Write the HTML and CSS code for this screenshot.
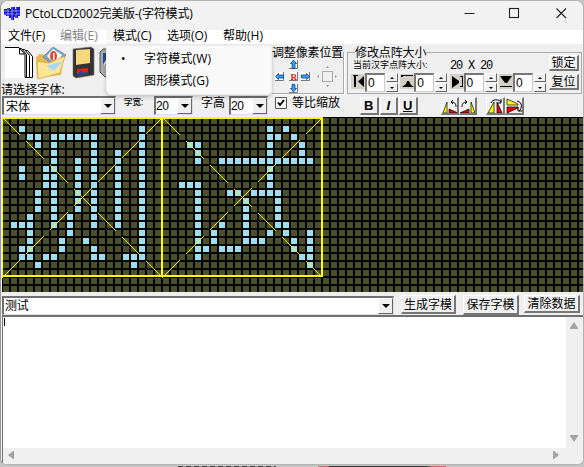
FILE: index.html
```html
<!DOCTYPE html>
<html lang="zh-CN">
<head>
<meta charset="utf-8">
<title>PCtoLCD2002</title>
<link rel="stylesheet" href="styles.css">
</head>
<body>
<main class="window">
  <header class="titlebar">
    <svg class="logo" width="17" height="14" viewBox="0 0 17 14"><path fill="#1212dc" d="M0 3h3V2h3v2h1V1h4v2h1V1h4v9h-2v2h-3v-1h-1v3H7v-2H5v-2H2V9H0z"/><path stroke="#f2f2f2" stroke-width=".5" d="M0 5h17M0 8h17M4 1v12M8 1v13M12 1v13"/><path fill="#202060" d="M5 3h2v2H5zM10 6h2v2h-2z"/></svg>
    <h1>PCtoLCD2002完美版-(字符模式)</h1>
    <svg class="controls" width="104" height="12" viewBox="0 0 104 12" fill="none" stroke="#222" stroke-width="1.1"><path d="M.5 6.500h10M92.500 1.500l9.500 9.500M102 1.500l-9.500 9.500"/><rect x="45.500" y="1.500" width="9" height="9"/></svg>
  </header>
  <nav class="menubar">
    <span>文件(F)</span><span class="off">编辑(E)</span><span class="open">模式(C)</span><span>选项(O)</span><span>帮助(H)</span>
    <div class="dropdown">
      <div><i>•</i>字符模式(W)</div>
      <div><i></i>图形模式(G)</div>
    </div>
  </nav>
  <section class="tools">
    <div class="files">
      <svg width="110" height="34" viewBox="0 0 110 34">
        <g fill="#fff" stroke="#000"><path d="M12.500 4.500h11l5 6v21h-18z"/><path d="M9.500 3.500h11l5 6v22h-17z"/><path d="M6.500 2.500h11l5 6v23h-17z"/><path stroke="none" d="M1 2h14l6 7v23H1z"/><path fill="none" d="M1 1.500h14l6 7v23M15.500 2v6h5"/></g>
        <path fill="#e8b84c" d="M32 12l3-4 9 1 3 3 13-1-3 18-24 3z"/><path fill="#7da5c4" stroke="#55738a" stroke-width=".6" d="M39 11L49 1l13 8-9 13z"/><path fill="#fff" d="M43 10l6-7 9 6-7 9z"/><ellipse cx="49.500" cy="10" rx="3.500" ry="5" fill="#e3492f"/><path fill="#fff" d="M49 7h1.500v7H49z"/>
        <path fill="#ffe596" stroke="#cda13a" stroke-width=".7" d="M33 15l12 2 16-7-5 17-22 6z"/><path fill="#a9d8ff" d="M42 20l17-5-9 10z"/>
        <path fill="#333" stroke="#777" stroke-width=".6" d="M69 3l18-2 3 2v26l-18 3-3-2z"/><path fill="#f6d77b" d="M72 4l14-1v14l-14 2z"/><path fill="#e12312" d="M73 23l11-1v6l-11 2z"/><path fill="#1447a4" d="M73 28l5-4v3l6-1v2l-11 2z"/>
        <path fill="#a9a9a9" stroke="#555" d="M96 6l3-3h11v28h-9l-5-5z"/><path fill="#26479b" d="M99 7h9v12h-9z"/><path stroke="#ddd" stroke-width="2" d="M100 19l5-8"/>
      </svg>
      <label>请选择字体:</label>
    </div>
    <fieldset class="move">
      <legend>调整像素位置</legend>
      <svg width="64" height="34" viewBox="0 0 64 34">
        <g fill="#fff"><path d="M15 1h9v9h-9zM1 13h9v9H1zM15 13h9v9h-9zM27 13h9v9h-9zM15 25h9v9h-9z"/></g>
        <path fill="none" stroke="#777" d="M23.500 1v8.500H15M9.500 13v8.500H1M23.500 13v8.500H15M35.500 13v8.500H27M23.500 25v8.500H15"/>
        <g fill="#37a0f4" stroke="#0b408b" stroke-width=".8"><path d="M19.500 1l3 3.500h-1.500v5h-3v-5h-1.500z"/><path d="M1.500 17.500l3-3v1.500h5v3h-5v1.500z"/><path d="M35.500 17.500l-3-3v1.500h-5v3h5v1.500z"/><path d="M19.500 33l3-3.500h-1.500v-4h-3v4h-1.500z"/></g>
        <text x="16.500" y="21" class="reset">R</text>
        <rect x="48.500" y="12.500" width="10" height="10" fill="none" stroke="#aaa"/><path fill="#999" d="M52 9l1.500-2L55 9zM52 26l1.500 2 1.500-2zM45 16l-2 1.500 2 1.500zM61 16l2 1.500-2 1.500z"/>
      </svg>
    </fieldset>
    <fieldset class="size">
      <legend>修改点阵大小</legend>
      <div class="current"><small>当前汉字点阵大小:</small><b>20 X 20</b></div>
      <div class="spinners">
        <div class="spin"><svg width="14" height="15"><path d="M2 1h5v1H5v11H3V2H2zM13 2v11L7 7.500z"/></svg><output>0</output><span><i></i><i></i></span></div>
        <div class="spin"><svg width="14" height="15"><path d="M1 1h12v1H3v1H1zM2 13h12l-3-2-2-4H7l-1 3z"/></svg><output>0</output><span><i></i><i></i></span></div>
        <div class="spin"><svg width="14" height="15"><path d="M2 2l7 5v2l-7 5zM10 2h3v11h-3v-1h2V3h-2z"/></svg><output>0</output><span><i></i><i></i></span></div>
        <div class="spin"><svg width="14" height="15"><path d="M1 2h12L8 9H6zM1 12h12v1H1z"/></svg><output>0</output><span><i></i><i></i></span></div>
      </div>
      <div class="locks"><button>锁定</button><button>复位</button></div>
    </fieldset>
  </section>
  <section class="format">
    <div class="combo font">宋体<i></i></div>
    <small class="w">字宽:</small>
    <div class="combo num">20<i></i></div>
    <span class="h">字高</span>
    <div class="combo num">20<i></i></div>
    <label class="check"><svg width="12" height="12"><path fill="#fff" stroke="#555" d="M.500.500h11v11H.500z"/><path fill="none" stroke="#000" stroke-width="2" d="M3 5.500l2 2.500 4-5"/></svg>等比缩放</label>
    <div class="styles"><button><b>B</b></button><button><b><em>I</em></b></button><button><b><u>U</u></b></button></div>
    <div class="turn">
      <button><svg width="16" height="16"><path fill="#ff0" stroke="#000" stroke-width=".7" d="M1 15L5 4v11z"/><path fill="#e00" stroke="#000" stroke-width=".7" d="M7 15v-4l9 4z"/><path fill="none" stroke="#000" d="M14 9c0-4-2-5-5-5M11 2L9 4l2 2"/></svg></button>
      <button><svg width="16" height="16"><path fill="#ff0" stroke="#000" stroke-width=".7" d="M11 15V4l4 11z"/><path fill="#e00" stroke="#000" stroke-width=".7" d="M0 15l9-4v4z"/><path fill="none" stroke="#000" d="M2 9c0-4 2-5 5-5M5 2l2 2-2 2"/></svg></button>
    </div>
    <div class="turn flip">
      <button><svg width="17" height="16"><path fill="#ff0" stroke="#000" stroke-width=".7" d="M1 15L7 4v11z"/><path fill="#e00" stroke="#000" stroke-width=".7" d="M10 4l5 11h-5z"/><path fill="none" stroke="#000" d="M4 5c1-4 8-4 10-1M14 1v4h-4"/></svg></button>
      <button><svg width="17" height="16"><path fill="#ff0" stroke="#000" stroke-width=".7" d="M1 1l11 5v1H1z"/><path fill="#e00" stroke="#000" stroke-width=".7" d="M1 15l11-5V9H1z"/><path fill="none" stroke="#000" d="M11 3c6 1 5 8 2 10M12 9v4h4"/></svg></button>
    </div>
  </section>
  <svg class="matrix" id="matrix" width="581" height="175" viewBox="2 117 581 175" shape-rendering="crispEdges">
    <defs><pattern id="cell" x="3" y="118" width="8" height="8" patternUnits="userSpaceOnUse"><rect width="8" height="8" fill="#000"/><rect width="6" height="6" fill="#4a5029"/></pattern></defs>
    <rect x="2" y="117" width="581" height="175" fill="#000"/>
    <rect x="3" y="118" width="580" height="174" fill="url(#cell)"/>
    <path id="dots" fill="#9ce0f0"/>
    <path id="diagonals" fill="#ff0"/>
    <path fill="#ff0" d="M2 117h321v2H2zM2 275h321v2H2zM2 117h1v160H2zM161 117h2v160h-2zM321 117h2v160h-2z"/>
  </svg>
  <section class="entry">
    <div class="combo text">测试<i></i></div>
    <button class="make">生成字模</button><button class="save">保存字模</button><button class="clear">清除数据</button>
  </section>
  <section class="result">
    <div class="paper"><span class="caret"></span></div>
    <svg class="vbar" width="17" height="132"><path fill="#a3a3a3" d="M4 11l4-6 4 6v1H4zM4 118h8v1l-4 6-4-6z"/></svg>
    <svg class="hbar" width="580" height="16"><path fill="#a3a3a3" d="M11 3v8h-1l-5-4 5-4zM550 3v8h1l5-4-5-4z"/></svg>
  </section>
</main>
<footer class="behind"><i class="one"></i><i class="two"></i></footer>
<script src="matrix.js"></script>
</body>
</html>
```
FILE: styles.css
```css
* { box-sizing: border-box; }
body {
  margin: 0; width: 584px; height: 467px; overflow: hidden;
  background: #c4c4c4; color: #000;
  font: 12px/14px "Open Sans", "Noto Sans CJK SC", sans-serif;
}
.window {
  width: 584px; height: 465px; display: flex; flex-direction: column;
  border: 1px solid #b3b3b3; border-left-color: #999; border-radius: 8px 8px 6px 6px;
  background: #efefef; overflow: hidden;
}
.titlebar { height: 29px; flex: none; display: flex; align-items: flex-start; background: #f2f2f2; padding: 4px 15px 0 3px; }
.logo { margin-top: 1px; }
h1 { margin: 1px 0 0 4px; font-size: 12px; line-height: 15px; font-weight: 400; letter-spacing: -.17px; white-space: nowrap; }
.controls { margin: 2px 0 0 auto; }
.menubar { position: relative; z-index: 2; height: 14px; flex: none; display: flex; background: #fff; }
.menubar > span { width: 54px; padding-left: 7px; line-height: 12px; white-space: nowrap; }
.menubar > span:first-child { width: 52px; }
.menubar > .off { width: 53px; color: #858585; }
.menubar > .open { background: #f7f7f7; }
.menubar > span:nth-child(4) { width: 56px; }
.dropdown {
  position: absolute; left: 105px; top: 15px; width: 166px; height: 50px; padding-top: 3px;
  background: #f9f9f9; border: 1px solid #eee; border-radius: 0 0 5px 5px; box-shadow: 0 2px 4px #0003;
}
.dropdown div { height: 22px; line-height: 20px; display: flex; letter-spacing: .15px; }
.dropdown i { width: 37px; padding-left: 14px; font-style: normal; }
.tools { height: 51px; flex: none; display: flex; }
.files { width: 271px; padding: 2px 0 0 3px; }
.files svg { display: block; }
.files label { display: block; margin: 2px 0 0 -3px; line-height: 15px; letter-spacing: .1px; }
fieldset { display: block; margin: 1px 0 0; padding: 0; border: 1px solid #aaa; height: 49px; min-width: 0; position: relative; }
legend { padding: 0; line-height: 15px; white-space: nowrap; height: 15px; }
.move { width: 72px; border-left: 0; box-shadow: 1px 1px #fff; }
.move svg { display: block; margin: -1px 0 0 2px; }
.move legend { letter-spacing: -.15px; }
.reset { font: bold 9px "Liberation Serif", serif; fill: #e01010; }
.size { width: 235px; margin-left: 3px; }
.size legend { margin-left: 7px; letter-spacing: -.1px; }
.current { display: flex; height: 13px; padding-left: 5px; align-items: center; margin-top: -2px; }
.current small { width: 97px; font-size: 9px; line-height: 12px; white-space: nowrap; }
.current b { font: 12px/12px "Liberation Mono", monospace; letter-spacing: -1.2px; padding-top: 2px; }
.spinners { display: flex; padding-left: 3px; margin-top: 2px; }
.spin { display: flex; width: 49.3px; height: 20px; }
.spin > svg { flex: none; background: #d4d0c8; margin-top: 1px; }
.spin output { width: 20px; height: 19px; padding: 2px 0 0 1px; background: #fff; border: 1px solid #ccc; border-top: 2px solid #777; border-left: 2px solid #777; font: 12px/12px "Liberation Sans", sans-serif; }
.spin span { width: 13px; }
.spin i { display: flex; height: 9px; margin: 0 0 1px 1px; background: #f0f0f0; border: 1px solid #fff; border-right-color: #666; border-bottom-color: #666; align-items: center; justify-content: center; }
.spin i::after, .combo i::after { content: ""; border: 2px solid transparent; border-top: 0; border-bottom: 2px solid #000; }
.spin i + i::after { transform: rotate(180deg); }
.locks { position: absolute; right: 2px; top: -5px; display: grid; gap: 3px; }
button { padding: 0; margin: 0; background: #f0f0f0; border: 1px solid #fff; border-right: 2px solid #777; border-bottom: 2px solid #777; color: #000; font: 12px/13px "Open Sans", "Noto Sans CJK SC", sans-serif; white-space: nowrap; }
.locks button { width: 30px; height: 16px; line-height: 12px; }
.format { height: 22px; flex: none; display: flex; align-items: flex-start; padding: 1px 0 0 1px; }
.combo { display: flex; justify-content: space-between; background: #fff; border: 1px solid #ddd; border-top: 2px solid #707070; border-left: 2px solid #707070; padding-left: 2px; line-height: 17px; height: 19px; }
.combo i { flex: none; width: 15px; height: 16px; margin: 0 0 0 auto; background: #f0f0f0; border: 1px solid #fff; border-right-color: #666; border-bottom-color: #666; display: flex; align-items: center; justify-content: center; }
.combo i::after { border: 4px solid transparent; border-bottom: 0; border-top: 4px solid #000; }
.font { width: 114px; }
.w { width: 38px; padding-left: 8px; font-size: 8.5px; line-height: 12px; font-weight: 500; white-space: nowrap; }
.num { width: 39px; padding-left: 0; font-family: "Liberation Sans", sans-serif; letter-spacing: -.3px; }
.h { width: 36px; padding-left: 8px; line-height: 14px; }
.check { display: flex; gap: 5px; width: 85px; margin-left: 7px; line-height: 14px; white-space: nowrap; }
.check svg { flex: none; margin-top: 1px; }
.styles, .turn { display: flex; gap: 1px; margin-top: 1px; }
.styles button { width: 18.500px; height: 18px; font: 13px/14px "Liberation Sans", sans-serif; }
.turn { gap: 0; margin-left: 23px; }
.turn button { width: 18px; height: 18px; overflow: hidden; }
.turn svg { display: block; }
.flip { margin-left: 9px; }
.flip button { width: 19px; }
.matrix { display: block; flex: none; margin-left: 1px; }
.entry { height: 23px; flex: none; display: flex; padding: 3px 0 0 1px; }
.text { width: 392px; height: 19px; margin: 1px 7px 0 0; padding-left: 1px; line-height: 15px; letter-spacing: -.2px; }
.make { width: 55px; height: 19px; margin-right: 7px; }
.save { width: 56px; height: 20px; margin-right: 5px; line-height: 17px; }
.clear { width: 56px; height: 18px; }
.result { flex: 1; display: grid; grid-template: 131px 1fr / 563px 17px; margin-left: 1px; border-left: 1px solid #777; border-top: 2px solid #707070; background: #efefef; }
.paper { background: #fff; padding: 1px; }
.caret { display: block; width: 1px; height: 8px; background: #000; }
.hbar { grid-column: 1 / 3; }
.behind { display: flex; height: 2px; padding-left: 178px; }
.behind i { height: 2px; margin-top: 1px; }
.one { width: 98px; background: repeating-linear-gradient(90deg, #444 0 5px, #999 5px 8px); }
.two { width: 128px; margin-left: 42px; background: linear-gradient(90deg, #c66 0 10px, #333 12px 108px, #c66 114px); }
```
FILE: matrix.js
```js
// Lit columns of each matrix row, counted from the left edge of the panel.
const rows = {
  1: [2, 17, 33, 35],
  2: [3, 4, 6, 7, 8, 9, 10, 11, 17, 33, 34, 36],
  3: [4, 6, 11, 17, 23, 24, 33, 37],
  4: [6, 11, 14, 17, 24, 33, 37],
  5: [6, 9, 11, 14, 17, 24, 27, 28, 29, 30, 31, 32, 33, 34, 35, 36, 37, 38],
  6: [2, 5, 6, 9, 11, 14, 17, 33],
  7: [2, 5, 6, 9, 11, 14, 17, 33],
  8: [5, 6, 9, 11, 14, 17, 22, 23, 24, 33],
  9: [4, 6, 9, 11, 14, 17, 24, 28, 29, 31, 32, 33, 34],
  10: [4, 6, 9, 11, 14, 17, 24, 30, 34],
  11: [4, 6, 9, 11, 14, 17, 24, 30, 34],
  12: [3, 6, 8, 11, 14, 17, 24, 30, 34],
  13: [1, 2, 3, 6, 8, 11, 14, 17, 24, 27, 30, 34, 35],
  14: [3, 8, 17, 24, 26, 30, 33, 35, 38],
  15: [3, 7, 10, 17, 24, 26, 30, 31, 32, 36, 38],
  16: [2, 3, 7, 11, 17, 24, 25, 27, 28, 29, 36, 38],
  17: [2, 3, 5, 6, 11, 12, 15, 16, 17, 24, 37, 38],
  18: [4, 16, 38]
};
document.getElementById("dots").setAttribute("d",
  Object.entries(rows).map(([r, cols]) =>
    cols.map(c => `M${3 + c * 8} ${118 + r * 8}h6v6h-6z`).join("")).join(""));

// Dashed one-pixel diagonals of both glyph boxes: 18 pixels on, 6 off.
let diagonals = "";
for (const x of [2, 162]) {
  for (let i = 0; i < 160; i++) {
    if (i % 24 < 18) {
      diagonals += `M${x + i} ${117 + i}h1v1h-1zM${x + i} ${277 - i}h1v1h-1z`;
    }
  }
}
document.getElementById("diagonals").setAttribute("d", diagonals);
```
